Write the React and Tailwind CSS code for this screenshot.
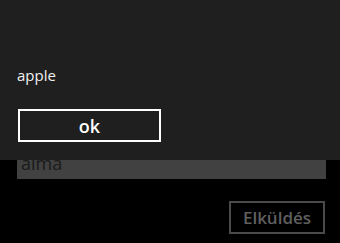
export default function App() {
  return (
    <div className="relative w-[340px] h-[243px] overflow-hidden bg-black font-['Open_Sans','Noto_Sans',sans-serif]">
      <div className="flex flex-col pt-[145px] px-[17px] pr-[14px]">
        <div className="h-[34px] bg-[#414141] px-[4px] text-[18px] leading-[36px] text-[#1a1a1a]">alma</div>
        <div className="mt-[22px] flex justify-end pr-[1px]">
          <button className="h-[33px] w-[96px] border-2 border-[#4a4a4a] text-[17px] font-semibold leading-[29px] text-[#5f5f5f]">
            Elküldés
          </button>
        </div>
      </div>

      <div className="absolute inset-x-0 top-0 h-[160px] bg-[#1f1f1f] px-[17px] pt-[64px]">
        <p className="text-[15px] leading-[22px] text-[#f0f0f0]">apple</p>
        <button className="mt-[23px] ml-[1px] h-[33px] w-[143px] border-2 border-white text-[18px] font-semibold leading-[28px] text-white">
          ok
        </button>
      </div>
    </div>
  );
}
